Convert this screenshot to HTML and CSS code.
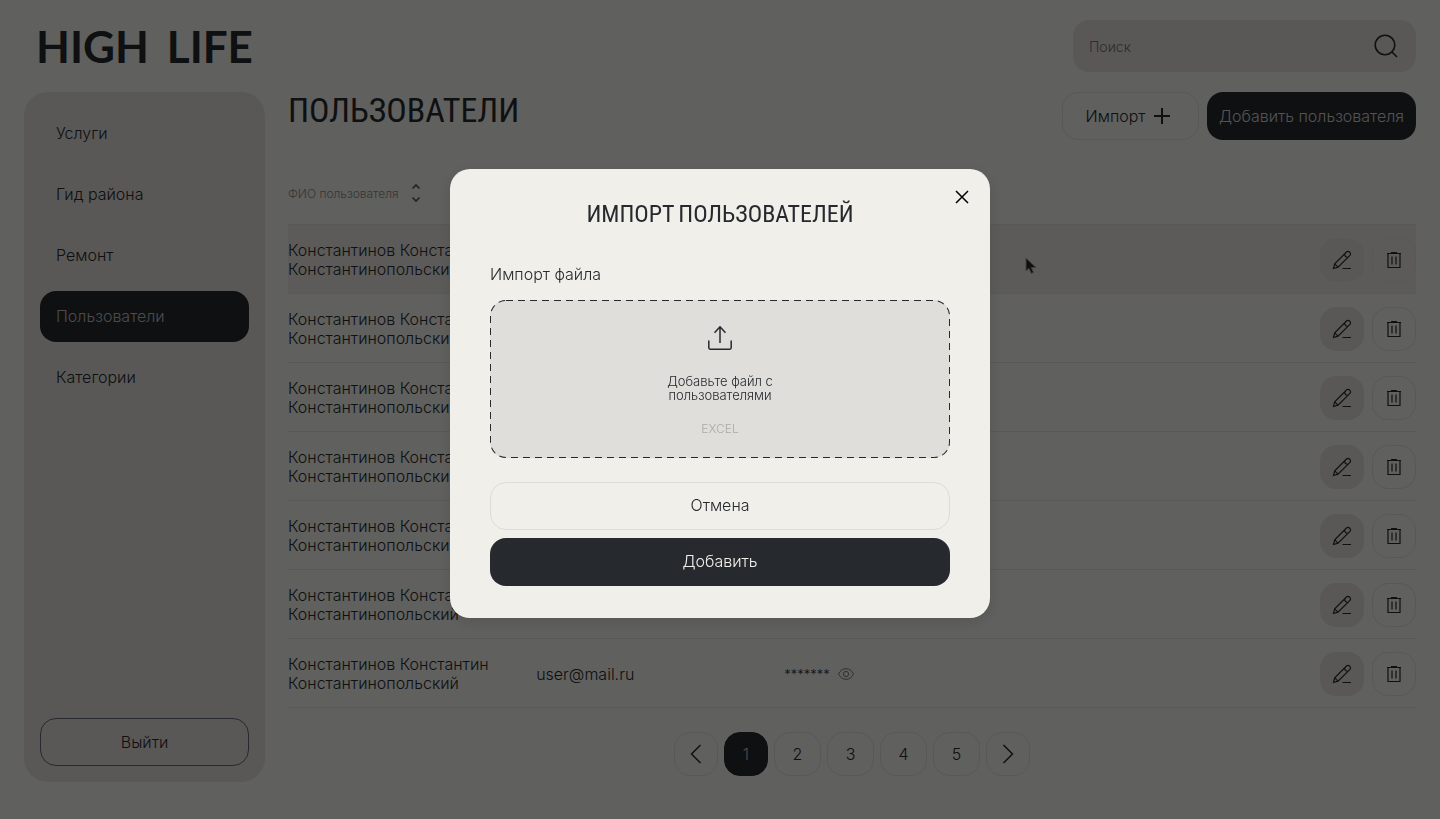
FILE: index.html
```html
<!DOCTYPE html>
<html lang="ru">
<head>
<meta charset="utf-8">
<meta name="viewport" content="width=device-width, initial-scale=1">
<title>High Life — Пользователи</title>
<link rel="stylesheet" href="styles.css">
</head>
<body>
<svg class="sprite" aria-hidden="true">
  <symbol id="edit" viewBox="0 0 24 24"><path d="M3.500 20.500l1.200-4.600L16.500 4a2.100 2.100 0 0 1 3 0l.4.4a2.100 2.100 0 0 1 0 3L8 19.200zM4.700 15.900L8 19.200M14.800 5.800a2.800 2.800 0 0 0 3.300 3.400M12.500 20.500h8.500"/></symbol>
  <symbol id="trash" viewBox="0 0 22 22"><path d="M5 4.500v14h12v-14M4 4.500h14M8 3.500h6M9 7.500v8M13 7.500v8"/></symbol>
  <symbol id="eye" viewBox="0 0 16 12"><path d="M.5 6C2.200 2.500 4.800.7 8 .7s5.800 1.800 7.500 5.300C13.800 9.500 11.200 11.300 8 11.300S2.200 9.500.5 6z"/><circle cx="8" cy="6" r="2.600"/></symbol>
</svg>

<header class="topbar">
  <a class="logo" href="#"><span>HIGH</span> <span>LIFE</span></a>
  <form class="search" role="search">
    <input class="search-input" type="search" placeholder="Поиск" aria-label="Поиск">
    <button class="search-button" type="button" aria-label="Найти">
      <svg width="24" height="24" viewBox="0 0 24 24"><circle cx="11" cy="11" r="9.800"/><path d="M18 18l5 5"/></svg>
    </button>
  </form>
</header>

<div class="layout">
  <aside class="sidebar">
    <nav class="menu">
      <a class="menu-link" href="#">Услуги</a>
      <a class="menu-link" href="#">Гид района</a>
      <a class="menu-link" href="#">Ремонт</a>
      <a class="menu-link menu-link-active" href="#" aria-current="page">Пользователи</a>
      <a class="menu-link" href="#">Категории</a>
    </nav>
    <button class="button button-outline" type="button">Выйти</button>
  </aside>

  <main class="content">
    <div class="heading">
      <h1 class="title">ПОЛЬЗОВАТЕЛИ</h1>
      <div class="heading-actions">
        <button class="button button-light button-import" type="button">Импорт
          <svg width="18" height="18" viewBox="0 0 18 18"><path d="M9 1v16M1 9h16"/></svg>
        </button>
        <button class="button button-dark button-add" type="button">Добавить пользователя</button>
      </div>
    </div>

    <table class="users">
      <thead>
        <tr>
          <th class="col-data"><span class="sortable">ФИО пользователя
            <svg width="10" height="20" viewBox="0 0 10 20"><path d="M1.500 5.500L5 2l3.500 3.500M1.500 14.500L5 18l3.500-3.500"/></svg></span></th>
          <th class="col-data"></th>
          <th class="col-data"></th>
          <th></th>
        </tr>
      </thead>
      <tbody id="rows"></tbody>
    </table>

    <nav class="pages" aria-label="Страницы">
      <button class="page page-arrow" type="button" aria-label="Назад"><svg width="12" height="20" viewBox="0 0 12 20"><path d="M10.500 1L1.500 10l9 9"/></svg></button>
      <button class="page page-active" type="button">1</button>
      <button class="page" type="button">2</button>
      <button class="page" type="button">3</button>
      <button class="page" type="button">4</button>
      <button class="page" type="button">5</button>
      <button class="page page-arrow" type="button" aria-label="Вперёд"><svg width="12" height="20" viewBox="0 0 12 20"><path d="M1.500 1l9 9-9 9"/></svg></button>
    </nav>
  </main>
</div>

<svg class="cursor" width="12" height="18" viewBox="0 0 12 18" aria-hidden="true"><path d="M1 1v13l3-2.600 2.300 5 2.200-1-2.200-4.800H11z"/></svg>

<div class="overlay">
  <form class="modal" role="dialog" aria-modal="true" aria-labelledby="modal-title">
    <button class="close" type="button" aria-label="Закрыть"><svg width="14" height="14" viewBox="0 0 14 14"><path d="M1 1l12 12M13 1L1 13"/></svg></button>
    <h2 class="modal-title" id="modal-title">ИМПОРТ ПОЛЬЗОВАТЕЛЕЙ</h2>
    <label class="field-label" for="file">Импорт файла</label>
    <label class="dropzone">
      <input class="file" id="file" type="file" accept=".xls,.xlsx">
      <svg class="dropzone-frame" aria-hidden="true"><rect width="100%" height="100%" rx="16"/></svg>
      <svg width="24" height="24" viewBox="0 0 24 24" aria-hidden="true"><path d="M12 17V.8M6.500 6.800L12 .8l5.500 6M.8 14.500v7.300c0 .8.600 1.400 1.400 1.400h19.600c.8 0 1.400-.6 1.400-1.400v-7.300"/></svg>
      <span class="dropzone-text">Добавьте файл с<br>пользователями</span>
      <span class="dropzone-hint">EXCEL</span>
    </label>
    <div class="modal-actions">
      <button class="button button-light" type="button">Отмена</button>
      <button class="button button-dark" type="submit">Добавить</button>
    </div>
  </form>
</div>
<script src="users.js"></script>
</body>
</html>
```

FILE: styles.css
```css
* { box-sizing: border-box; }

:root {
  --ink: #26292e;
  --paper: #f0efea;
  --panel: #e1dcd7;
  --line: #dddcd8;
}

body {
  margin: 0;
  min-height: 100vh;
  padding: 20px 24px 37px;
  display: flex;
  flex-direction: column;
  gap: 20px;
  background: var(--paper);
  color: var(--ink);
  font: 300 16px/19px Inter, "Open Sans", sans-serif;
}

button, input { font: inherit; color: inherit; }
button { cursor: pointer; padding: 0; border: 0; background: none; }
a { color: inherit; text-decoration: none; }
svg { fill: none; stroke: currentColor; flex: none; }
.sprite { position: absolute; width: 0; height: 0; }

.topbar { display: flex; justify-content: space-between; align-items: center; }
.logo { display: flex; gap: 18px; padding-left: 12px; font: 700 44px/52px Lato, sans-serif; }
.search {
  display: flex;
  align-items: center;
  width: 343px;
  height: 52px;
  padding: 0 18px 0 16px;
  border-radius: 16px;
  background: var(--panel);
}
.search-input { flex: 1; min-width: 0; padding: 0; border: 0; outline: 0; background: none; font-size: 14px; }
.search-input::placeholder { color: #70716f; opacity: 1; }
.search-button { display: flex; }
.search-button svg { stroke-width: 1.6; }

.layout { flex: 1; display: grid; grid-template-columns: 241px minmax(0, 1fr); gap: 23px; }
.sidebar {
  display: flex;
  flex-direction: column;
  justify-content: space-between;
  padding: 16px;
  border-radius: 24px;
  background: var(--panel);
}
.menu { display: flex; flex-direction: column; gap: 10px; }
.menu-link { padding: 16px; border-radius: 16px; }
.menu-link-active { background: var(--ink); color: #bdbcb9; }

.button {
  display: flex;
  align-items: center;
  justify-content: center;
  gap: 8px;
  height: 48px;
  border: 1px solid transparent;
  border-radius: 16px;
}
.button-outline { border-color: #5f6875; }
.button-light { border-color: var(--line); }
.button-dark { background: var(--ink); color: var(--paper); }
.button-import { width: 137px; padding-right: 4px; }
.button-import svg { stroke-width: 2; }
.button-add { width: 209px; }
.heading .button-dark { color: #d0cfcb; }

.heading { display: flex; justify-content: space-between; align-items: flex-start; height: 48px; }
.heading-actions { display: flex; gap: 8px; }
.title, .modal-title {
  margin: 0;
  font-family: "Bebas Neue", "Roboto Condensed", Roboto, sans-serif;
  font-weight: 400;
}
.title { font-size: 34px; line-height: 40px; }

.users { width: 100%; margin-top: 22px; table-layout: fixed; border-spacing: 0; }
.users th, .users td { padding: 0; border-bottom: 1px solid var(--line); text-align: left; }
.users th { height: 63px; font-size: 12px; font-weight: 300; color: #888986; }
.users td { height: 69px; padding-top: 2px; }
.col-data { width: 22%; }
.sortable { display: flex; align-items: center; gap: 12px; }
.sortable svg { stroke: #55585b; stroke-width: 1.6; }
.row-hover { background: #e6e4df; }
.secret, .row-actions { display: flex; align-items: center; gap: 8px; }
.secret { font-size: 13px; }
.secret svg { color: #777976; }
.row-actions { justify-content: flex-end; }
.icon-button {
  display: grid;
  place-items: center;
  width: 44px;
  height: 44px;
  border: 1px solid var(--line);
  border-radius: 16px;
}
.icon-button-filled { border-color: var(--panel); background: var(--panel); }
.icon-button svg { stroke-width: 1.2; }
.eye-button { display: flex; }

.pages { display: flex; justify-content: center; gap: 6px; margin-top: 24px; }
.page {
  display: flex;
  align-items: center;
  justify-content: center;
  min-width: 47px;
  height: 44px;
  border: 1px solid var(--line);
  border-radius: 16px;
}
.page-arrow, .page-active { min-width: 44px; }
.page-arrow svg { stroke-width: 1.5; }
.page-active { background: var(--ink); border-color: var(--ink); color: #bdbcb9; }

.cursor { position: absolute; left: 1025px; top: 257px; fill: var(--ink); stroke: #a3a29f; }

.overlay {
  position: fixed;
  inset: 0;
  display: flex;
  align-items: center;
  justify-content: center;
  padding-bottom: 33px;
  background: rgba(0, 0, 0, .6);
}
.modal {
  position: relative;
  width: 540px;
  padding: 28px 40px 32px;
  border-radius: 20px;
  background: var(--paper);
  box-shadow: 0 4px 16px rgba(0, 0, 0, .12);
}
.close { position: absolute; top: 16px; right: 16px; display: grid; place-items: center; width: 24px; height: 24px; color: #000; }
.close svg { stroke-width: 1.5; }
.modal-title { font-size: 24px; line-height: 36px; text-align: center; }
.field-label { display: block; margin-top: 32px; }
.dropzone {
  position: relative;
  display: flex;
  flex-direction: column;
  align-items: center;
  margin: 16px 0 24px;
  padding: 26px 16px 22px;
  border-radius: 16px;
  background: #dfdeda;
  cursor: pointer;
}
.dropzone svg { stroke-width: 1.5; }
.dropzone .dropzone-frame { position: absolute; inset: 0; width: 100%; height: 100%; stroke-width: 2; stroke-dasharray: 7 5; border-radius: 16px; overflow: hidden; }
.file { position: absolute; inset: 0; width: 100%; height: 100%; opacity: 0; }
.dropzone-text { margin-top: 24px; font-size: 13px; line-height: 14px; text-align: center; }
.dropzone-hint { margin-top: 20px; font-size: 12px; line-height: 14px; color: #abaaa8; }
.modal-actions { display: grid; gap: 8px; }
```

FILE: users.js
```js
const name = 'Константинов Константин Константинопольский';
const users = [
  { name }, { name }, { name }, { name }, { name }, { name },
  { name, email: 'user@mail.ru', password: '*******' }
];

const secret = password => password ? `
  <div class="secret"><span>${password}</span><button class="eye-button" type="button" aria-label="Показать пароль"><svg width="16" height="12"><use href="#eye"/></svg></button></div>` : '';

document.getElementById('rows').innerHTML = users.map((user, i) => `
  <tr class="${i === 0 ? 'row-hover' : ''}">
    <td>${user.name}</td>
    <td>${user.email || ''}</td>
    <td>${secret(user.password)}</td>
    <td><div class="row-actions">
      <button class="icon-button icon-button-filled" type="button" aria-label="Редактировать"><svg width="24" height="24"><use href="#edit"/></svg></button>
      <button class="icon-button" type="button" aria-label="Удалить"><svg width="22" height="22"><use href="#trash"/></svg></button>
    </div></td>
  </tr>`).join('');
```
